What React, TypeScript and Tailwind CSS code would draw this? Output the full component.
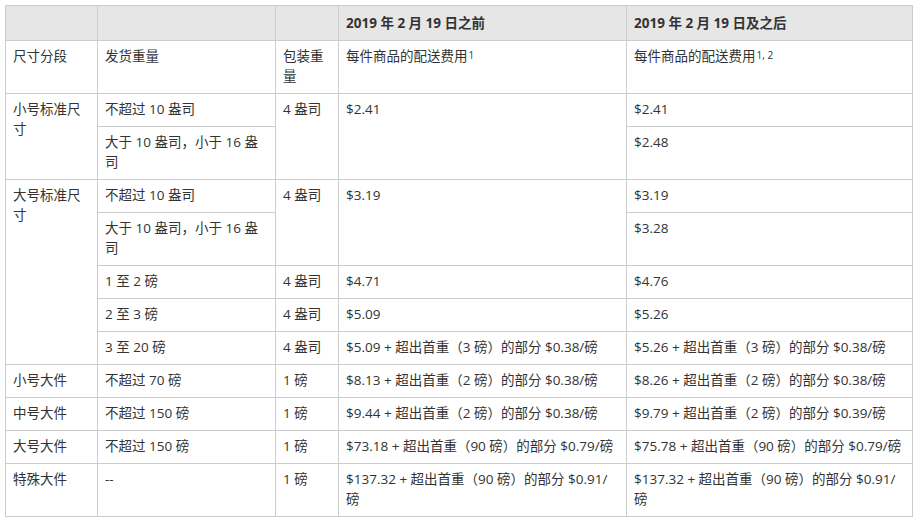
const font = { fontFamily: '"Open Sans", "Noto Sans CJK SC", sans-serif' };

function Td({
  children,
  rowSpan,
}: {
  children: React.ReactNode;
  rowSpan?: number;
}) {
  return (
    <td
      rowSpan={rowSpan}
      className="border border-[#cccccc] px-[7px] pt-[5px] pb-[7px] align-top leading-[20px]"
    >
      {children}
    </td>
  );
}

function Sup({ children }: { children: React.ReactNode }) {
  return <sup className="text-[10px] relative -top-[2px] ml-[1px]">{children}</sup>;
}

function Fee({ base, first, rate }: { base: string; first: string; rate: string }) {
  return (
    <>
      {base} + 超出首重（{first} 磅）的部分 {rate}/磅
    </>
  );
}

export default function App() {
  return (
    <div className="w-[915px] h-[521px] bg-white p-[5px] text-[13.5px] text-[#333333]" style={font}>
      <table className="w-[907px] table-fixed border-collapse">
        <colgroup>
          <col className="w-[92px]" />
          <col className="w-[178px]" />
          <col className="w-[63px]" />
          <col className="w-[288px]" />
          <col className="w-[286px]" />
        </colgroup>
        <thead>
          <tr className="bg-[#e6e6e6]">
            <th className="border border-[#cccccc] px-[7px] py-[7px] leading-[20px]"></th>
            <th className="border border-[#cccccc] px-[7px] py-[7px] leading-[20px]"></th>
            <th className="border border-[#cccccc] px-[7px] py-[7px] leading-[20px]"></th>
            <th className="border border-[#cccccc] px-[7px] py-[7px] leading-[20px] text-left font-bold">
              2019 年 2 月 19 日之前
            </th>
            <th className="border border-[#cccccc] px-[7px] py-[7px] leading-[20px] text-left font-bold">
              2019 年 2 月 19 日及之后
            </th>
          </tr>
        </thead>
        <tbody>
          <tr>
            <Td>尺寸分段</Td>
            <Td>发货重量</Td>
            <Td>包装重量</Td>
            <Td>
              每件商品的配送费用<Sup>1</Sup>
            </Td>
            <Td>
              每件商品的配送费用<Sup>1, 2</Sup>
            </Td>
          </tr>

          <tr>
            <Td rowSpan={2}>小号标准尺寸</Td>
            <Td>不超过 10 盎司</Td>
            <Td rowSpan={2}>4 盎司</Td>
            <Td rowSpan={2}>$2.41</Td>
            <Td>$2.41</Td>
          </tr>
          <tr>
            <Td>大于 10 盎司，小于 16 盎司</Td>
            <Td>$2.48</Td>
          </tr>

          <tr>
            <Td rowSpan={5}>大号标准尺寸</Td>
            <Td>不超过 10 盎司</Td>
            <Td rowSpan={2}>4 盎司</Td>
            <Td rowSpan={2}>$3.19</Td>
            <Td>$3.19</Td>
          </tr>
          <tr>
            <Td>大于 10 盎司，小于 16 盎司</Td>
            <Td>$3.28</Td>
          </tr>
          <tr>
            <Td>1 至 2 磅</Td>
            <Td>4 盎司</Td>
            <Td>$4.71</Td>
            <Td>$4.76</Td>
          </tr>
          <tr>
            <Td>2 至 3 磅</Td>
            <Td>4 盎司</Td>
            <Td>$5.09</Td>
            <Td>$5.26</Td>
          </tr>
          <tr>
            <Td>3 至 20 磅</Td>
            <Td>4 盎司</Td>
            <Td>
              <Fee base="$5.09" first="3" rate="$0.38" />
            </Td>
            <Td>
              <Fee base="$5.26" first="3" rate="$0.38" />
            </Td>
          </tr>

          <tr>
            <Td>小号大件</Td>
            <Td>不超过 70 磅</Td>
            <Td>1 磅</Td>
            <Td>
              <Fee base="$8.13" first="2" rate="$0.38" />
            </Td>
            <Td>
              <Fee base="$8.26" first="2" rate="$0.38" />
            </Td>
          </tr>
          <tr>
            <Td>中号大件</Td>
            <Td>不超过 150 磅</Td>
            <Td>1 磅</Td>
            <Td>
              <Fee base="$9.44" first="2" rate="$0.38" />
            </Td>
            <Td>
              <Fee base="$9.79" first="2" rate="$0.39" />
            </Td>
          </tr>
          <tr>
            <Td>大号大件</Td>
            <Td>不超过 150 磅</Td>
            <Td>1 磅</Td>
            <Td>
              <Fee base="$73.18" first="90" rate="$0.79" />
            </Td>
            <Td>
              <Fee base="$75.78" first="90" rate="$0.79" />
            </Td>
          </tr>
          <tr>
            <Td>特殊大件</Td>
            <Td>--</Td>
            <Td>1 磅</Td>
            <Td>
              <Fee base="$137.32" first="90" rate="$0.91" />
            </Td>
            <Td>
              <Fee base="$137.32" first="90" rate="$0.91" />
            </Td>
          </tr>
        </tbody>
      </table>
    </div>
  );
}
